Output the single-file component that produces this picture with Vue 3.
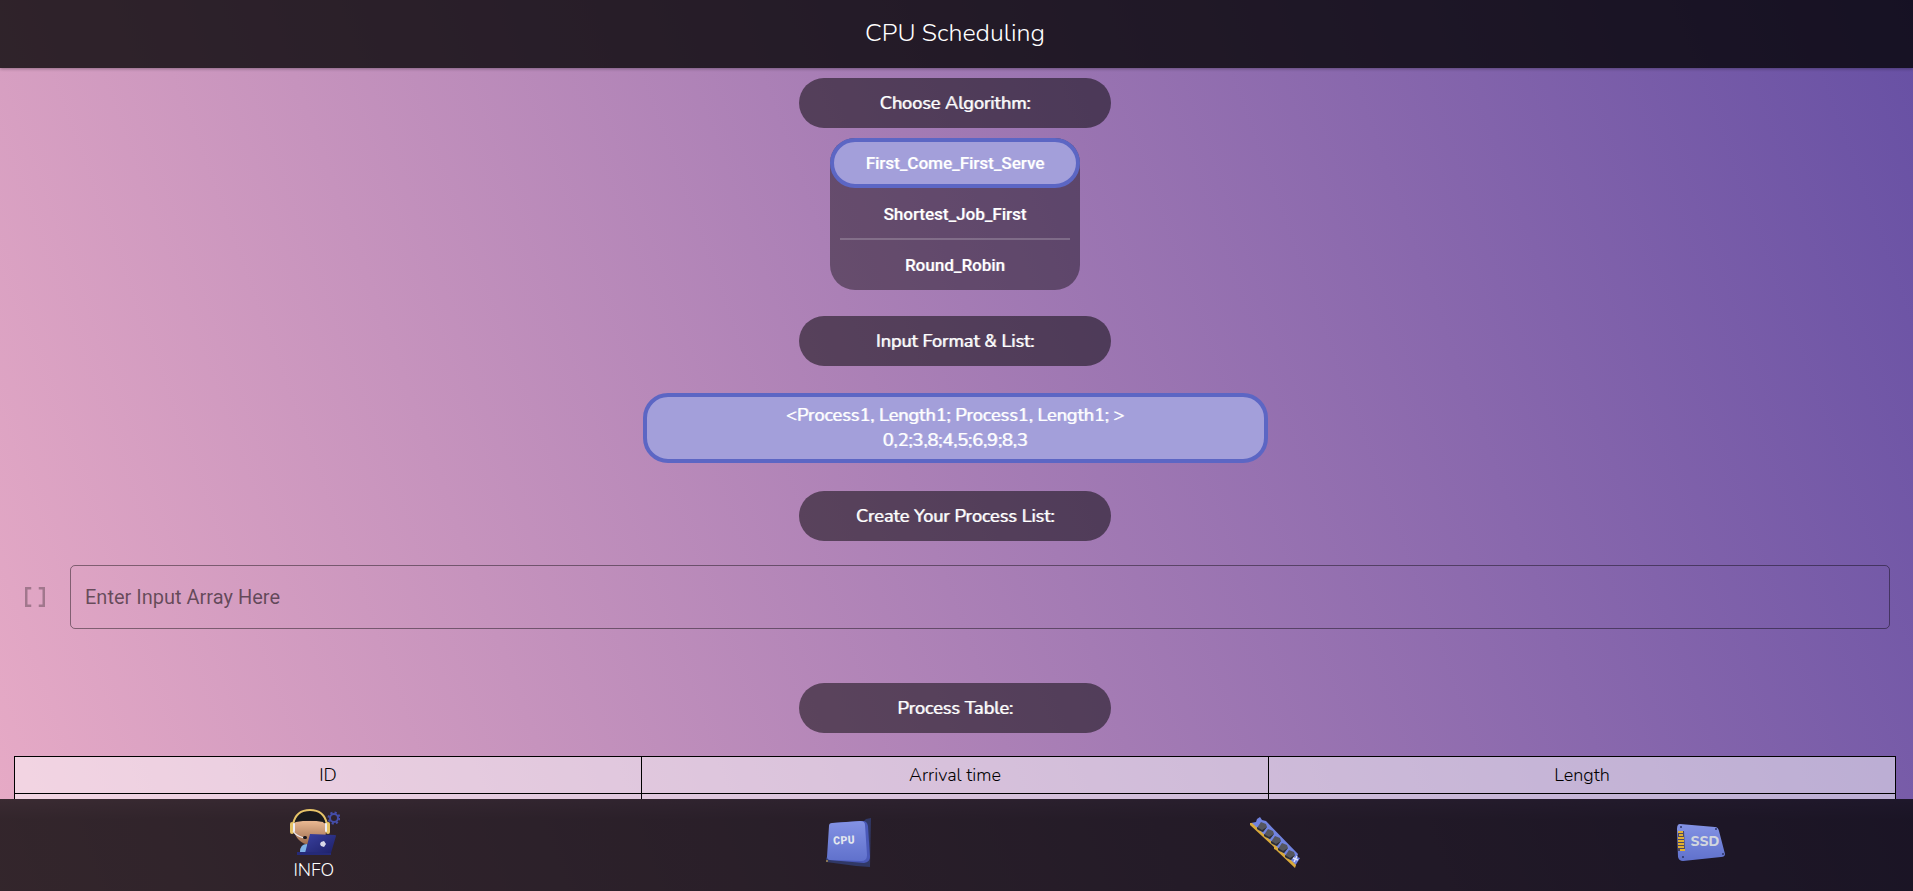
<script setup>
import { ref } from 'vue'
const algorithms = ['First_Come_First_Serve', 'Shortest_Job_First', 'Round_Robin']
const selected = ref(algorithms[0])
const processes = ref('')
</script>

<template>
  <div class="page">
    <header class="topbar"><h1>CPU Scheduling</h1></header>

    <main class="content">
      <h2 class="pill">Choose Algorithm:</h2>
      <div class="algorithms">
        <button
          v-for="name in algorithms"
          :key="name"
          type="button"
          class="algorithm"
          :class="{ active: name === selected }"
          @click="selected = name"
        >{{ name }}</button>
      </div>

      <h2 class="pill">Input Format &amp; List:</h2>
      <p class="format">&lt;Process1, Length1; Process1, Length1; &gt;<br />0,2;3,8;4,5;6,9;8,3</p>

      <h2 class="pill">Create Your Process List:</h2>
      <div class="entry">
        <label for="processes" aria-label="Process array">
          <svg width="30" height="30" viewBox="0 0 24 24" fill="currentColor">
            <path d="M4 4h5v2H6v12h3v2H4zM15 4h5v16h-5v-2h3V6h-3z" />
          </svg>
        </label>
        <input id="processes" v-model="processes" type="text" placeholder="Enter Input Array Here" />
      </div>

      <h2 class="pill">Process Table:</h2>
      <table class="processes">
        <thead>
          <tr><th>ID</th><th>Arrival time</th><th>Length</th></tr>
        </thead>
        <tbody>
          <tr><td></td><td></td><td></td></tr>
        </tbody>
      </table>
    </main>

    <nav class="bottombar">
      <a href="#info" class="tab info">
        <svg width="52" height="48" viewBox="0 0 52 48">
          <defs>
            <linearGradient id="skin" x1="0" y1="0" x2="0" y2="1">
              <stop offset="0" stop-color="#eab892" />
              <stop offset="1" stop-color="#9a6a4c" />
            </linearGradient>
            <linearGradient id="lid" x1="0" y1="0" x2="1" y2="1">
              <stop offset="0" stop-color="#3a41a0" />
              <stop offset="1" stop-color="#1d2068" />
            </linearGradient>
          </defs>
          <path d="M6 13h32v11q-1 13-14 13T6 24z" fill="url(#skin)" />
          <path d="M6 15Q9 3 22 3t16 12q-2 1-3-1-13-3-27 0z" fill="#19191c" />
          <path d="M5 16Q8 2 22 2t17 14" fill="none" stroke="#e6c468" stroke-width="2" />
          <rect x="2" y="14" width="4" height="12" rx="2" fill="#e6c468" />
          <rect x="38" y="14" width="4" height="12" rx="2" fill="#e6c468" />
          <rect x="5" y="15" width="2" height="9" rx="1" fill="#eeeef6" />
          <rect x="37" y="15" width="2" height="9" rx="1" fill="#eeeef6" />
          <path d="M5 23q3 5 11 7" fill="none" stroke="#eceaf0" stroke-width="1.2" />
          <rect x="15" y="28" width="4" height="3" rx="1.5" fill="#18151b" />
          <path d="M12 44q0-8 7-8l4 8z" fill="#7fb2e6" />
          <path d="M22 26l25 1q1 0 1 1l-5 17H17z" fill="url(#lid)" />
          <path d="M9 44h15l19 1v2H9z" fill="#252a78" />
          <path d="M33 34l3-1 2 3-2 3-3-1-1-2z" fill="#d8d9e8" />
          <circle cx="46" cy="10" r="4" fill="none" stroke="#444da8" stroke-width="2" />
          <circle cx="46" cy="10" r="5.5" fill="none" stroke="#444da8" stroke-width="2" stroke-dasharray="2.2 2.1" />
        </svg>
        <span>INFO</span>
      </a>
      <a href="#cpu" class="tab" aria-label="CPU">
        <svg width="52" height="52" viewBox="0 0 52 52">
          <defs>
            <linearGradient id="blue" x1="0" y1="0" x2="0" y2="1">
              <stop offset="0" stop-color="#8392e4" />
              <stop offset="1" stop-color="#6071cc" />
            </linearGradient>
          </defs>
          <path d="M42 3l5-1-1 49-14-1-30-4v-4z" fill="#303866" />
          <path d="M9 7L39 5q4 0 5 5l2 31q0 5-6 6L5 44z" fill="#4a59b8" />
          <path d="M8 7l28-2q5 0 5 4l2 30q0 6-6 6L6 44q-3 0-3-3L5 10q0-3 3-3z" fill="url(#blue)" />
          <path d="M2 45h2" stroke="#e0b040" />
          <text class="chip-label" x="20" y="28" text-anchor="middle" transform="rotate(-3 20 25)">CPU</text>
        </svg>
      </a>
      <a href="#memory" class="tab" aria-label="Memory">
        <svg width="52" height="52" viewBox="0 0 52 52">
          <path d="M2 7l5-1 1-3 3-2 2 3 4 1 32 33-1 3 3 1-5 8z" fill="#7183df" />
          <path d="M1 7h2l44 42-1 3-19-18-2-1v-2L1 9z" fill="#d9a93a" />
          <g v-for="n in 5" :key="n" :transform="`translate(${n * 7 + 6} ${n * 7 + 4})`">
            <path d="M5 0L1 5l-5-2-1-2 4-6 5 2z" fill="#55565e" />
            <path d="M5 0L1 5l-6-3V0l5 3z" fill="#2c2d35" />
          </g>
          <path d="M44 42l5 2M48 40l-3 6" stroke="#dfe3fa" stroke-width="1.5" />
        </svg>
      </a>
      <a href="#storage" class="tab" aria-label="Storage">
        <svg width="52" height="52" viewBox="0 0 52 52">
          <path d="M6 8l35 3q3 0 4 4l6 23q0 3-4 3l-38 4q-4 0-5-4L3 13q0-5 3-5z" fill="url(#blue)" />
          <path d="M4 15h6l1 20H4z" fill="#4b4862" />
          <path d="M4 16h5M5 19h4M4 22h6M4 25h6M4 28h6M4 31h6M6 34h5" stroke="#e1b031" stroke-width="2" />
          <g fill="#2c3468">
            <circle cx="7" cy="11" r="1" /><circle cx="42" cy="13" r="1" />
            <circle cx="49" cy="38" r="1" /><circle cx="9" cy="41" r="1" />
          </g>
          <text class="drive-label" x="31" y="30" text-anchor="middle">SSD</text>
        </svg>
      </a>
    </nav>
  </div>
</template>

<style>
html, body { margin: 0; height: 100%; overflow: hidden; }
#app { height: 100%; }
</style>

<style scoped>
.page {
  display: flex;
  flex-direction: column;
  height: 100%;
  background: linear-gradient(70deg, #e8abc6, #6750a4);
  font-family: Nunito, "Open Sans", sans-serif;
}
.topbar {
  flex: none;
  padding: 15px 3px 17px 0;
  background: rgba(0, 0, 0, .78);
  box-shadow: 0 1px 3px rgba(0, 0, 0, .3);
  color: #fff;
  text-align: center;
}
h1 { margin: 0; font-size: 25px; line-height: 36px; font-weight: 300; }
.content {
  flex: 1;
  min-height: 0;
  overflow: hidden;
  display: flex;
  flex-direction: column;
  align-items: center;
  padding: 10px 17px 0 14px;
}
.pill {
  flex: none;
  width: 312px;
  margin: 0;
  border-radius: 25px;
  background: rgba(0, 0, 0, .5);
  color: #fff;
  font-size: 18px;
  line-height: 50px;
  font-weight: 400;
  text-align: center;
  text-shadow: 1px 0 0 rgba(255, 255, 255, .7);
}
.algorithms {
  flex: none;
  display: flex;
  flex-direction: column;
  width: 250px;
  margin: 10px 0 26px;
  border-radius: 25px;
  background: rgba(0, 0, 0, .4);
}
.algorithm {
  position: relative;
  height: 50px;
  padding: 0;
  border: 0;
  background: none;
  color: #fff;
  font: 500 17px Roboto, sans-serif;
  text-align: center;
  text-shadow: 1px 0 0 rgba(255, 255, 255, .3);
}
.algorithm:not(.active):not(:last-child) { height: 52px; }
.algorithm:not(.active):not(:last-child)::after {
  content: "";
  position: absolute;
  left: 10px;
  right: 10px;
  bottom: 0;
  height: 2px;
  background: rgba(255, 255, 255, .2);
}
.algorithm.active {
  border: 4px solid #5c66c4;
  border-radius: 25px;
  background: #a39fda;
}
.format {
  flex: none;
  box-sizing: border-box;
  width: 625px;
  margin: 27px 0 28px;
  padding: 6px;
  border: 4px solid #5c66c4;
  border-radius: 25px;
  background: #a39fda;
  color: #fff;
  font-size: 18px;
  line-height: 25px;
  font-weight: 400;
  text-align: center;
  text-shadow: 1px 0 0 rgba(255, 255, 255, .7);
}
.entry {
  flex: none;
  display: flex;
  align-items: center;
  align-self: stretch;
  gap: 20px;
  margin: 24px 6px 54px 6px;
}
.entry label { display: flex; color: rgba(0, 0, 0, .28); }
.entry input {
  flex: 1;
  min-width: 0;
  box-sizing: border-box;
  height: 64px;
  padding: 0 14px;
  border: 1px solid rgba(0, 0, 0, .42);
  border-radius: 5px;
  outline: 0;
  background: none;
  font: 400 20px Roboto, sans-serif;
}
.entry input::placeholder { color: rgba(0, 0, 0, .55); opacity: 1; }
.processes {
  flex: none;
  width: 100%;
  margin-top: 23px;
  border-collapse: collapse;
  table-layout: fixed;
  background: rgba(255, 255, 255, .5);
}
th, td {
  height: 36px;
  padding: 0;
  border: 1px solid #000;
  font-size: 18px;
  line-height: 24px;
  font-weight: 300;
  color: #000;
}
.bottombar {
  flex: none;
  display: grid;
  grid-template-columns: 3fr 2fr 2fr 2fr;
  height: 92px;
  background: linear-gradient(rgba(0, 0, 0, .75), rgba(0, 0, 0, .78) 20px);
}
.tab {
  display: flex;
  flex-direction: column;
  align-items: center;
  justify-content: center;
  gap: 2px;
  padding-bottom: 6px;
  color: #fff;
  font-size: 18px;
  line-height: 25px;
  font-weight: 300;
  text-decoration: none;
}
.info { padding: 0 10px 0 0; }
.chip-label { fill: #e4e8ee; font: 700 12px "Liberation Mono", monospace; }
.drive-label { fill: #d2d6de; font: 800 14px Nunito, sans-serif; }
</style>
